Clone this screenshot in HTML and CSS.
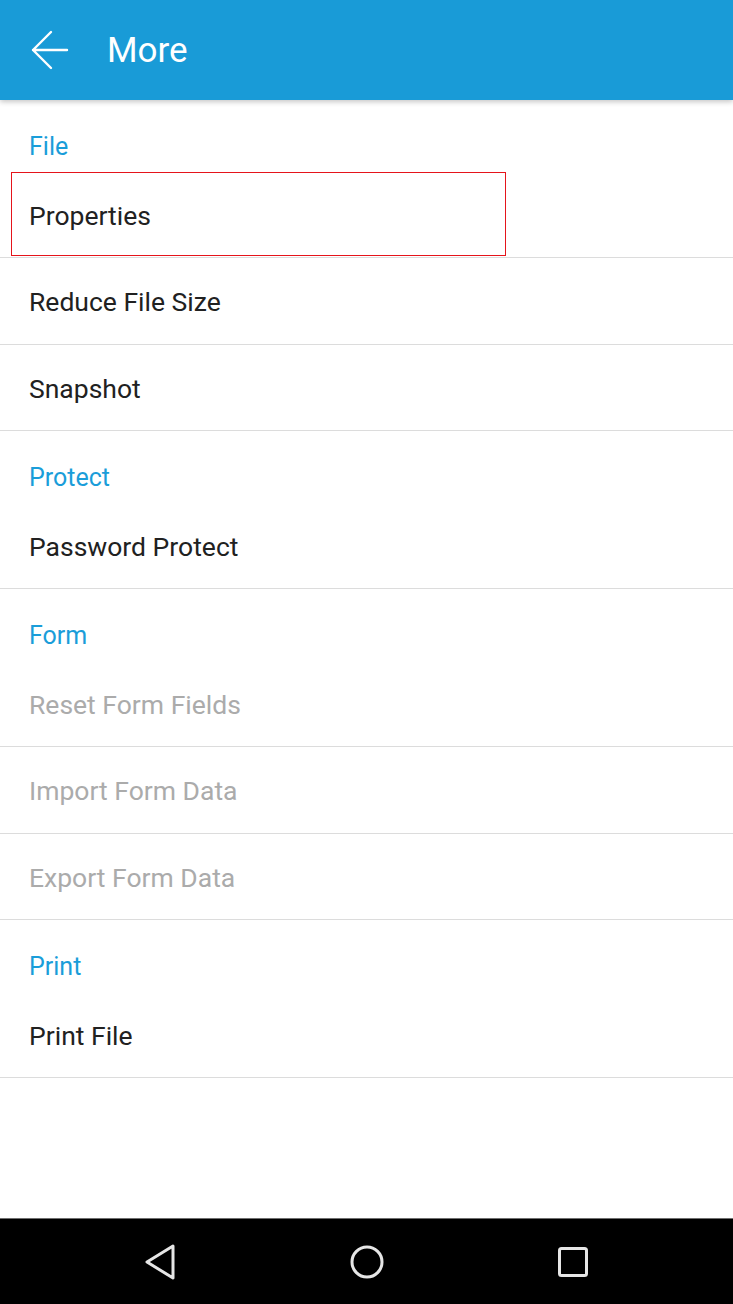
FILE: index.html
```html
<!DOCTYPE html>
<html lang="en">
<head>
  <meta charset="UTF-8">
  <title>More</title>
  <link rel="stylesheet" href="styles.css">
</head>
<body>
  <header class="toolbar">
    <svg class="back" width="40" height="40" viewBox="0 0 40 40">
      <path d="M3 20 H37 M21 2 L3 20 L21 38" fill="none" stroke="#fff" stroke-width="2.4" stroke-linecap="round" stroke-linejoin="round"/>
    </svg>
    <h1 class="title">More</h1>
  </header>

  <main class="list">
    <section class="group">
      <h2 class="group-title">File</h2>
      <div class="item highlighted">Properties<span class="mark"></span></div>
      <div class="item">Reduce File Size</div>
      <div class="item">Snapshot</div>
    </section>

    <section class="group">
      <h2 class="group-title">Protect</h2>
      <div class="item">Password Protect</div>
    </section>

    <section class="group">
      <h2 class="group-title">Form</h2>
      <div class="item disabled">Reset Form Fields</div>
      <div class="item disabled">Import Form Data</div>
      <div class="item disabled">Export Form Data</div>
    </section>

    <section class="group">
      <h2 class="group-title">Print</h2>
      <div class="item">Print File</div>
    </section>
  </main>

  <footer class="navbar">
    <div class="nav-slot">
      <svg width="40" height="40" viewBox="0 0 40 40">
        <path d="M32 4 L6 20 L32 36 Z" fill="none" stroke="#e6e6e6" stroke-width="3" stroke-linejoin="round"/>
      </svg>
    </div>
    <div class="nav-slot">
      <svg width="40" height="40" viewBox="0 0 40 40">
        <circle cx="20" cy="20" r="15" fill="none" stroke="#e6e6e6" stroke-width="3"/>
      </svg>
    </div>
    <div class="nav-slot">
      <svg width="40" height="40" viewBox="0 0 40 40">
        <rect x="6.5" y="6.5" width="27" height="27" rx="2" fill="none" stroke="#e6e6e6" stroke-width="3"/>
      </svg>
    </div>
  </footer>
</body>
</html>
```

FILE: styles.css
```css
body {
  font-family: Roboto, "Noto Sans", sans-serif;
  margin: 0;
  padding: 0;
  background-color: #fff;
  height: 1304px;
  display: flex;
  flex-direction: column;
}

.toolbar {
  position: relative;
  z-index: 1;
  height: 100px;
  flex: none;
  background-color: #199bd7;
  display: flex;
  align-items: center;
  padding-left: 30px;
  box-shadow: 0 2px 5px rgba(0,0,0,0.22);
}

.toolbar .back {
  flex: none;
}

.title {
  margin: 0 0 0 37px;
  font-size: 35px;
  font-weight: 400;
  color: #fff;
}

.list {
  flex: 1;
}

.group-title {
  box-sizing: border-box;
  height: 71.5px;
  margin: 0;
  padding: 35px 0 0 29px;
  font-size: 25px;
  line-height: 24px;
  font-weight: 400;
  color: #1a9dd9;
}

.item {
  position: relative;
  box-sizing: border-box;
  height: 86.5px;
  padding: 32px 0 0 29px;
  font-size: 26.5px;
  line-height: 24px;
  color: #212121;
  border-bottom: 1px solid #dcdcdc;
}

.item.disabled {
  color: #ababab;
}

.mark {
  position: absolute;
  left: 11px;
  top: 0.5px;
  width: 495px;
  height: 84px;
  box-sizing: border-box;
  border: 1px solid #e5141b;
}

.navbar {
  flex: none;
  height: 86px;
  background-color: #000;
  border-top: 1px solid #6e6e6e;
  box-sizing: border-box;
  display: flex;
  justify-content: center;
  align-items: center;
}

.nav-slot {
  width: 206px;
  display: flex;
  justify-content: center;
}
```
